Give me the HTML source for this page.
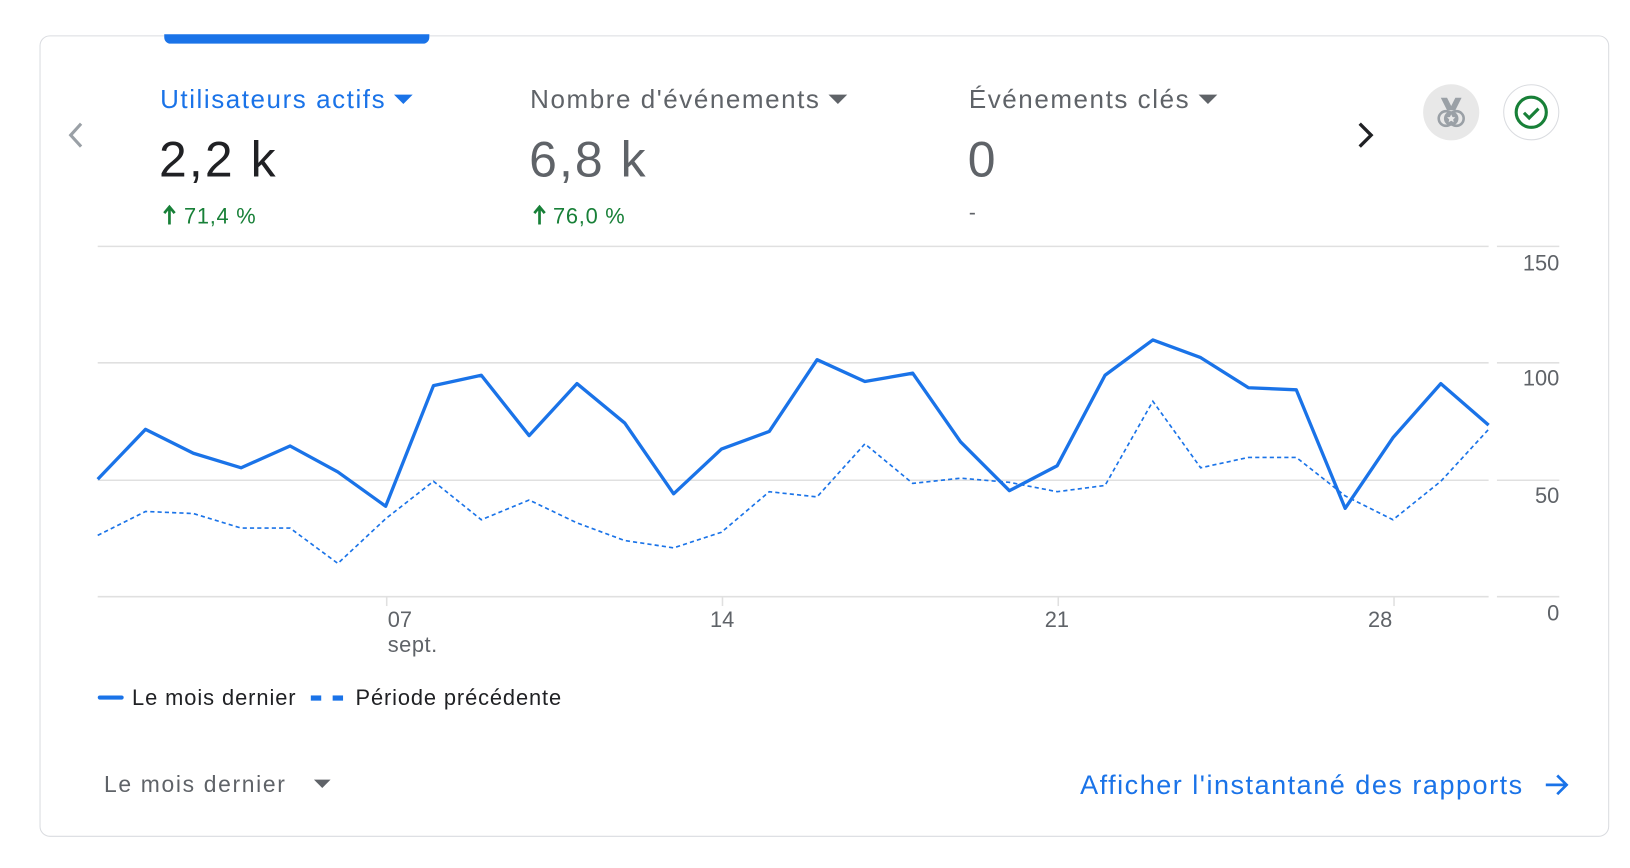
<!DOCTYPE html>
<html><head><meta charset="utf-8"><style>
*{margin:0;padding:0;box-sizing:border-box}
html,body{width:1630px;height:868px;overflow:hidden;background:#fff;font-family:"Liberation Sans",sans-serif}
#w{position:absolute;left:0;top:0;width:1568px;height:835px;transform:scale(1.03954);transform-origin:0 0}
.a{position:absolute;white-space:nowrap}
.card{position:absolute;left:38px;top:34px;width:1510px;height:771px;border:1px solid #dadce0;border-radius:10px}
.tab{font-size:25px;line-height:25px;color:#5f6368;letter-spacing:1.5px}
.tri{display:inline-block;width:0;height:0;border-left:9px solid transparent;border-right:9px solid transparent;border-top:9px solid currentColor;vertical-align:middle;margin-left:8px;margin-top:-4px}
.val{font-size:48px;line-height:48px;color:#5f6368;letter-spacing:2px}
.pct{font-size:21px;color:#188038;letter-spacing:0.7px}
.ax{font-size:21px;color:#5f6368;line-height:21px}
</style></head><body><div id="w">
<div class="card"></div>
<div class="a" style="left:158px;top:33px;width:255px;height:9px;background:#1a73e8;border-radius:0 0 6px 6px"></div>
<svg class="a" style="left:60px;top:115px" width="24" height="30"><path d="M18 4 L8 15 L18 26" fill="none" stroke="#9aa0a6" stroke-width="3"/></svg>
<svg class="a" style="left:1302px;top:115px" width="24" height="30"><path d="M6 4 L17 15 L6 26" fill="none" stroke="#202124" stroke-width="3.2"/></svg>

<div class="a tab" style="left:154px;top:84px;color:#1a73e8">Utilisateurs actifs<span class="tri"></span></div>
<div class="a val" style="left:153px;top:131px;color:#202124">2,2 k</div>
<svg class="a" style="left:156px;top:196px" width="16" height="22"><path d="M7 20V4M2 9L7 3L12 9" fill="none" stroke="#188038" stroke-width="2.6"/></svg>
<div class="a pct" style="left:177px;top:197px">71,4 %</div>

<div class="a tab" style="left:510px;top:84px">Nombre d'événements<span class="tri"></span></div>
<div class="a val" style="left:509px;top:131px">6,8 k</div>
<svg class="a" style="left:512px;top:196px" width="16" height="22"><path d="M7 20V4M2 9L7 3L12 9" fill="none" stroke="#188038" stroke-width="2.6"/></svg>
<div class="a pct" style="left:532px;top:197px">76,0 %</div>

<div class="a tab" style="left:932px;top:84px">Événements clés<span class="tri"></span></div>
<div class="a val" style="left:931px;top:131px">0</div>
<div class="a" style="left:932px;top:194px;font-size:20px;color:#5f6368">-</div>

<div class="a" style="left:1369px;top:81px;width:54px;height:54px;border-radius:50%;background:#e8e8e8"></div>
<svg class="a" style="left:1369px;top:81px" width="54" height="54"><path d="M17 13h6l4 8 4-8h6l-6 12h-8z" fill="#9aa0a6"/><circle cx="22" cy="33" r="7" fill="none" stroke="#9aa0a6" stroke-width="2.5"/><circle cx="32" cy="33" r="7" fill="none" stroke="#9aa0a6" stroke-width="2.5"/><circle cx="27" cy="33" r="7" fill="#9aa0a6"/><path d="M27 29l1.2 2.6 2.8.3-2.1 1.9.6 2.8-2.5-1.4-2.5 1.4.6-2.8-2.1-1.9 2.8-.3z" fill="#e8e8e8"/></svg>
<div class="a" style="left:1446px;top:81px;width:54px;height:54px;border-radius:50%;border:1px solid #dadce0"></div>
<svg class="a" style="left:1446px;top:81px" width="54" height="54"><circle cx="27" cy="27" r="14.5" fill="none" stroke="#188038" stroke-width="3"/><path d="M20 27.5l5 5 9-9" fill="none" stroke="#188038" stroke-width="3"/></svg>

<svg class="a" style="left:0;top:0" width="1568" height="700">
<g stroke="#e0e0e0" stroke-width="1.5">
<line x1="94" y1="237" x2="1432" y2="237"/><line x1="94" y1="349" x2="1432" y2="349"/><line x1="94" y1="462" x2="1432" y2="462"/><line x1="94" y1="574" x2="1432" y2="574"/>
<line x1="1440" y1="237" x2="1500" y2="237"/><line x1="1440" y1="349" x2="1500" y2="349"/><line x1="1440" y1="462" x2="1500" y2="462"/><line x1="1440" y1="574" x2="1500" y2="574"/>
<line x1="372" y1="574" x2="372" y2="583"/><line x1="695" y1="574" x2="695" y2="583"/><line x1="1018" y1="574" x2="1018" y2="583"/><line x1="1341" y1="574" x2="1341" y2="583"/>
</g>
<polyline fill="none" stroke="#1a73e8" stroke-width="1.6" stroke-dasharray="4 3" points="94,515 140,492 186,494 232,508 279,508 325,542 371,499 417,463 463,500 509,481 555,503 601,520 648,527 694,512 740,473 786,478 832,427 878,465 924,460 971,464 1017,473 1063,467 1109,386 1155,450 1201,440 1247,440 1294,477 1340,500 1386,463 1432,413"/>
<polyline fill="none" stroke="#1a73e8" stroke-width="3.2" stroke-linejoin="round" points="94,461 140,413 186,436 232,450 279,429 325,454 371,487 417,371 463,361 509,419 555,369 601,407 648,475 694,432 740,415 786,346 832,367 878,359 924,425 971,472 1017,448 1063,361 1109,327 1155,344 1201,373 1247,375 1294,489 1340,421 1386,369 1432,409"/>
</svg>
<div class="a ax" style="left:1440px;width:60px;text-align:right;top:243px">150</div>
<div class="a ax" style="left:1440px;width:60px;text-align:right;top:354px">100</div>
<div class="a ax" style="left:1440px;width:60px;text-align:right;top:467px">50</div>
<div class="a ax" style="left:1440px;width:60px;text-align:right;top:580px">0</div>
<div class="a ax" style="left:373px;top:586px">07</div>
<div class="a ax" style="left:373px;top:610px;letter-spacing:0.5px">sept.</div>
<div class="a ax" style="left:683px;top:586px">14</div>
<div class="a ax" style="left:1005px;top:586px">21</div>
<div class="a ax" style="left:1316px;top:586px">28</div>

<div class="a" style="left:94px;top:669px;width:25px;height:4px;background:#1a73e8;border-radius:2px"></div>
<div class="a" style="left:127px;top:660px;font-size:21px;color:#202124;letter-spacing:0.9px">Le mois dernier</div>
<div class="a" style="left:299px;top:669px;width:10px;height:5px;background:#1a73e8"></div>
<div class="a" style="left:320px;top:669px;width:10px;height:5px;background:#1a73e8"></div>
<div class="a" style="left:342px;top:660px;font-size:21px;color:#202124;letter-spacing:0.85px">Période précédente</div>

<div class="a" style="left:100px;top:742px;font-size:22px;color:#5f6368;letter-spacing:1.6px">Le mois dernier</div>
<div class="a" style="left:302px;top:750px;width:0;height:0;border-left:8px solid transparent;border-right:8px solid transparent;border-top:8px solid #5f6368"></div>
<div class="a" style="left:1039px;top:740px;font-size:26px;color:#1a73e8;letter-spacing:1.45px">Afficher l'instantané des rapports</div>
<svg class="a" style="left:1484px;top:741px" width="28" height="28"><path d="M3 14h20M14 5l9 9-9 9" fill="none" stroke="#1a73e8" stroke-width="2.6"/></svg>
</div></body></html>
